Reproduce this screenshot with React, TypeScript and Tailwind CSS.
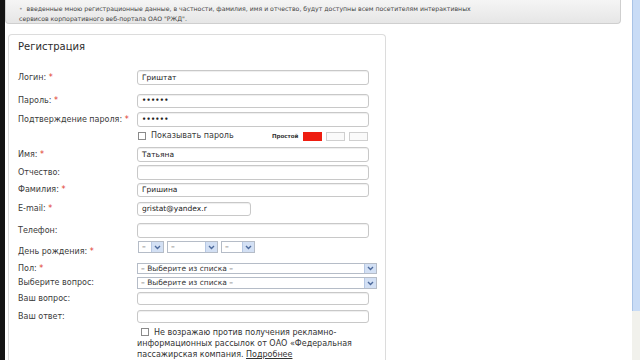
import React from "react";

const font = { fontFamily: '"DejaVu Sans", Verdana, sans-serif' };

const Star = () => <span className="text-[#e03a2c]"> *</span>;

const Label = ({ text, req, className = "" }: { text: string; req?: boolean; className?: string }) => (
  <div className={`w-[119px] shrink-0 text-[8px] leading-[10px] text-[#3a3a3a] ${className}`}>
    {text}:{req && <Star />}
  </div>
);

const Input = ({ value = "", w = "w-[232px]", dots = false }: { value?: string; w?: string; dots?: boolean }) => (
  <div
    className={`${w} h-full rounded-[3px] border border-[#c8c8c8] bg-white pl-[4px] flex items-center shadow-[inset_0_1px_1px_rgba(0,0,0,0.07)] text-[#222] ${
      dots ? "text-[6.5px] font-bold tracking-[0.3px]" : "text-[7.5px]"
    }`}
  >
    {value}
  </div>
);

const Arrow = () => (
  <div className="h-full w-[12px] flex items-center justify-center bg-[#d3e0f4] border-l border-[#b7c8e3]">
    <svg width="7" height="5" viewBox="0 0 7 5">
      <path d="M1 1 L3.5 3.5 L6 1" fill="none" stroke="#4d6a9c" strokeWidth="1.4" />
    </svg>
  </div>
);

const Select = ({ text = "–", w }: { text?: string; w: string }) => (
  <div className={`${w} h-full flex items-center border border-[#b5bcc7] bg-white text-[7.5px] text-[#333]`}>
    <div className="flex-1 pl-[3px] truncate">{text}</div>
    <Arrow />
  </div>
);

const Row = ({ mt, h, children }: { mt: string; h: string; children: React.ReactNode }) => (
  <div className={`flex items-center ${mt} ${h}`}>{children}</div>
);

export default function App() {
  return (
    <div className="flex h-[360px] w-[640px] overflow-hidden bg-white" style={font}>
      <div className="w-[5px] shrink-0 bg-[#141414]" />
      <div className="flex-1 flex flex-col">
        <div className="w-[616px] h-[24px] shrink-0 rounded-b-[4px] border border-t-0 border-[#cfcfcf] bg-gradient-to-b from-[#f5f5f5] to-[#e6e6e6] pl-[13px] pt-[4px] text-[6.2px] leading-[10px] text-[#444]">
          <span className="text-[#999]">•</span>&nbsp;&nbsp;введенные мною регистрационные данные, в частности, фамилия, имя и отчество, будут доступны всем посетителям интерактивных
          <br />
          сервисов корпоративного веб-портала ОАО "РЖД".
        </div>
        <div className="ml-[3px] mt-[10px] w-[378px] flex-1 rounded-t-[4px] border border-b-0 border-[#dcdcdc] pl-[9px]">
          <div className="mt-[6px] text-[10px] leading-[12px] text-[#2b2b2b]">Регистрация</div>

          <Row mt="mt-[17px]" h="h-[15px]">
            <Label text="Логин" req />
            <Input value="Гриштат" />
          </Row>
          <Row mt="mt-[9px]" h="h-[14px]">
            <Label text="Пароль" req />
            <Input value="••••••" dots />
          </Row>
          <Row mt="mt-[4px]" h="h-[15px]">
            <Label text="Подтверждение пароля" req />
            <Input value="••••••" dots />
          </Row>
          <Row mt="mt-[4px]" h="h-[10px]">
            <div className="w-[120px] shrink-0" />
            <div className="w-[8px] h-[8px] border border-[#8a8a8a] bg-white" />
            <div className="ml-[5px] w-[121px] text-[8px] leading-[10px] text-[#3a3a3a]">Показывать пароль</div>
            <div className="text-[5.5px] font-bold text-[#333]">Простой</div>
            <div className="ml-[5px] w-[19px] h-[9px] bg-[#ee1d10]" />
            <div className="ml-[4px] w-[19px] h-[9px] border border-[#cfcfcf] bg-[#fafafa]" />
            <div className="ml-[4px] w-[19px] h-[9px] border border-[#cfcfcf] bg-[#fafafa]" />
          </Row>
          <Row mt="mt-[6px]" h="h-[15px]">
            <Label text="Имя" req />
            <Input value="Татьяна" />
          </Row>
          <Row mt="mt-[3px]" h="h-[15px]">
            <Label text="Отчество" />
            <Input />
          </Row>
          <Row mt="mt-[3px]" h="h-[14px]">
            <Label text="Фамилия" req />
            <Input value="Гришина" />
          </Row>
          <Row mt="mt-[5px]" h="h-[14px]">
            <Label text="E-mail" req />
            <Input value="gristat@yandex.r" w="w-[114px]" />
          </Row>
          <Row mt="mt-[7px]" h="h-[15px]">
            <Label text="Телефон" />
            <Input />
          </Row>
          <Row mt="mt-[3px]" h="h-[12px]">
            <Label text="День рождения" req className="translate-y-[5px]" />
            <div className="ml-[1px] h-full flex gap-[3px]">
              <Select w="w-[26px]" />
              <Select w="w-[51px]" />
              <Select w="w-[34px]" />
            </div>
          </Row>
          <Row mt="mt-[10px]" h="h-[11px]">
            <Label text="Пол" req />
            <Select w="w-[240px]" text="– Выберите из списка –" />
          </Row>
          <Row mt="mt-[3px]" h="h-[12px]">
            <Label text="Выберите вопрос" />
            <Select w="w-[240px]" text="– Выберите из списка –" />
          </Row>
          <Row mt="mt-[3px]" h="h-[13px]">
            <Label text="Ваш вопрос" />
            <Input />
          </Row>
          <Row mt="mt-[5px]" h="h-[13px]">
            <Label text="Ваш ответ" />
            <Input />
          </Row>
          <div className="mt-[4px] ml-[119px] w-[232px] text-[8px] leading-[11px] text-[#333]">
            <span className="inline-block w-[8px] h-[8px] border border-[#8a8a8a] bg-white ml-[4px] mr-[5px] align-[-1px]" />
            Не возражаю против получения рекламно-информационных рассылок от ОАО «Федеральная пассажирская компания.{" "}
            <span className="underline">Подробнее</span>
          </div>
        </div>
      </div>
      <div className="w-[11px] shrink-0 bg-white" />
      <div className="w-[8px] shrink-0 flex flex-col">
        <div className="h-[311px] border-l border-[#a9c3e6] bg-[#c9dcf6]" />
        <div className="flex-1 bg-[#f1f1ec]" />
      </div>
    </div>
  );
}
